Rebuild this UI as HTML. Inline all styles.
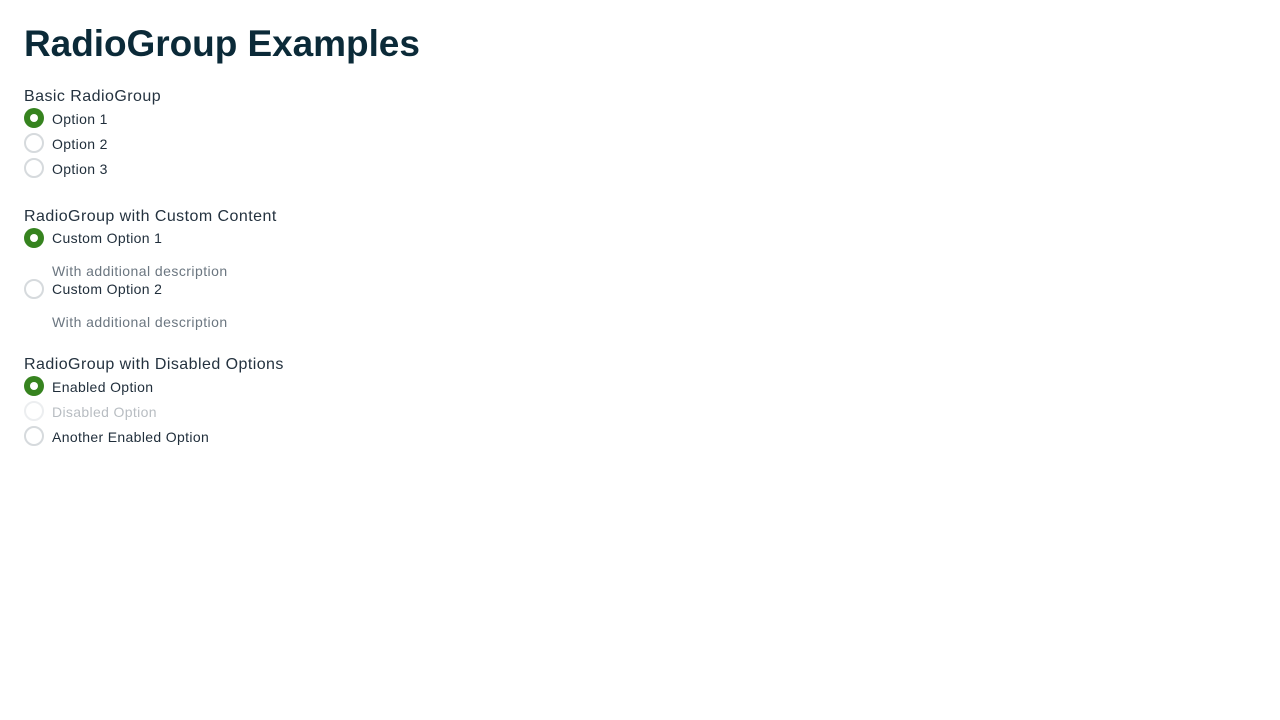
<!DOCTYPE html>
<html><head><style>
body{margin:0;background:#fff;font-family:"Liberation Sans",sans-serif;color:#1f2d3a;}
.a{position:absolute;white-space:nowrap;line-height:20px;}
h1{position:absolute;left:24px;top:22px;margin:0;font-size:37px;line-height:44px;font-weight:bold;color:#0b2a38;letter-spacing:-0.05px;}
.h{font-size:16px;color:#24323f;letter-spacing:0.45px;}
.o{font-size:14px;color:#1f2d3a;letter-spacing:0.35px;}
.d{font-size:14px;color:#6b7680;letter-spacing:0.45px;}
.dis{color:#b8bdc2;}
.r{position:absolute;left:24px;width:16px;height:16px;border:2px solid #d6dadd;border-radius:50%;box-sizing:content-box;}
.r.c{border:none;width:20px;height:20px;background:#36831f;}
.r.c::after{content:"";position:absolute;left:6px;top:6px;width:8px;height:8px;border-radius:50%;background:#fff;}
.r.x{border-color:#eceef0;}
</style></head><body>
<h1>RadioGroup Examples</h1>
<div class="a h" style="left:24px;top:87px">Basic RadioGroup</div>
<div class="r c" style="top:108px"></div><div class="a o" style="left:52px;top:109px">Option 1</div>
<div class="r" style="top:133px"></div><div class="a o" style="left:52px;top:134px">Option 2</div>
<div class="r" style="top:158px"></div><div class="a o" style="left:52px;top:159px">Option 3</div>

<div class="a h" style="left:24px;top:207px">RadioGroup with Custom Content</div>
<div class="r c" style="top:228px"></div><div class="a o" style="left:52px;top:228px">Custom Option 1</div>
<div class="a d" style="left:52px;top:261px">With additional description</div>
<div class="r" style="top:279px"></div><div class="a o" style="left:52px;top:279px">Custom Option 2</div>
<div class="a d" style="left:52px;top:312px">With additional description</div>

<div class="a h" style="left:24px;top:355px">RadioGroup with Disabled Options</div>
<div class="r c" style="top:376px"></div><div class="a o" style="left:52px;top:377px">Enabled Option</div>
<div class="r x" style="top:401px"></div><div class="a o dis" style="left:52px;top:402px">Disabled Option</div>
<div class="r" style="top:426px"></div><div class="a o" style="left:52px;top:427px">Another Enabled Option</div>
</body></html>
